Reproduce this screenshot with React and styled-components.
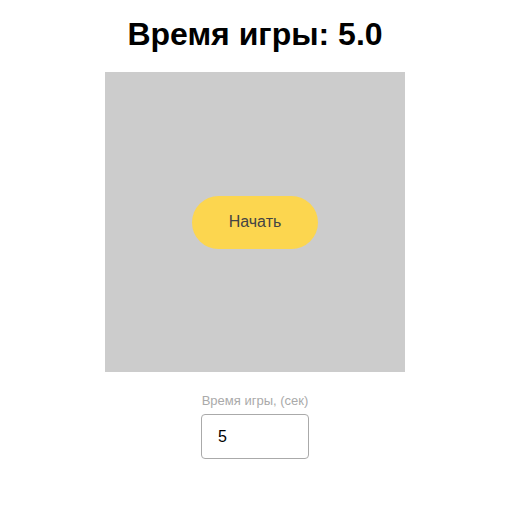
import React, { useState } from "react";
import styled, { createGlobalStyle } from "styled-components";

const GlobalStyle = createGlobalStyle`
  body {
    margin: 0;
    font-family: "Liberation Sans", Arial, sans-serif;
    background: #fff;
  }
`;

const Page = styled.div`
  display: flex;
  flex-direction: column;
  align-items: center;
  padding: 16px 0 0 2px;
`;

const Title = styled.h1`
  margin: 0 0 19px;
  font-size: 32px;
  font-weight: bold;
  color: #000;
`;

const Field = styled.div`
  width: 300px;
  height: 300px;
  background: #ccc;
  display: flex;
  align-items: center;
  justify-content: center;
`;

const StartButton = styled.button`
  width: 126px;
  height: 53px;
  border: none;
  border-radius: 27px;
  background: #fcd64f;
  color: #444;
  font-family: inherit;
  font-size: 16px;
  cursor: pointer;
`;

const Controls = styled.div`
  display: flex;
  flex-direction: column;
  align-items: center;
  margin-top: 21px;
`;

const Label = styled.label`
  font-size: 13px;
  color: #aaa;
  line-height: 15px;
  margin-bottom: 6px;
`;

const Input = styled.input`
  box-sizing: border-box;
  width: 108px;
  height: 45px;
  border: 1px solid #aaa;
  border-radius: 4px;
  padding: 0 16px;
  font-family: inherit;
  font-size: 16px;
  color: #000;
  outline: none;
`;

export default function App() {
  const [time, setTime] = useState("5");
  return (
    <Page>
      <GlobalStyle />
      <Title>Время игры: {Number(time).toFixed(1)}</Title>
      <Field>
        <StartButton>Начать</StartButton>
      </Field>
      <Controls>
        <Label htmlFor="game-time">Время игры, (сек)</Label>
        <Input
          id="game-time"
          type="number"
          value={time}
          onChange={(e) => setTime(e.target.value)}
        />
      </Controls>
    </Page>
  );
}
